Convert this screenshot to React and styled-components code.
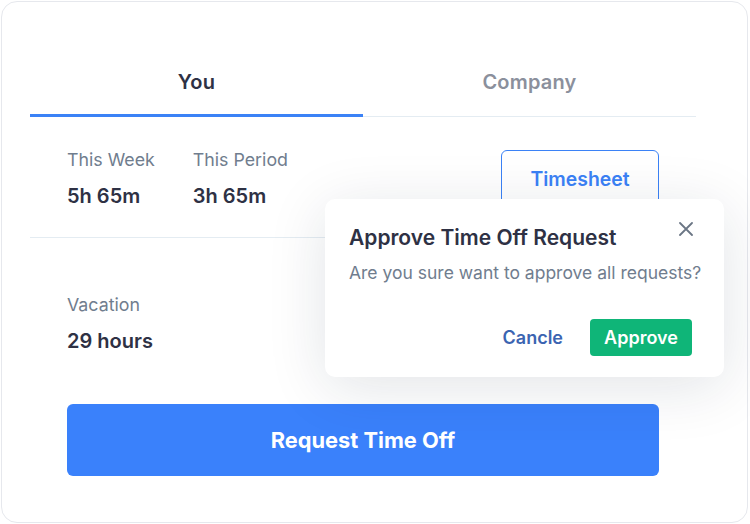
import React from "react";
import styled, { createGlobalStyle } from "styled-components";

const GlobalStyle = createGlobalStyle`
  body {
    margin: 0;
    background: #ffffff;
    font-family: Inter, "Noto Sans", sans-serif;
  }
`;

const tabs = ["You", "Company"];

export default function App() {
  return (
    <>
      <GlobalStyle />
      <Card>
        <TabBar>
          {tabs.map((t, i) => (
            <Tab key={t} $active={i === 0}>
              {t}
            </Tab>
          ))}
        </TabBar>

        <StatsRow>
          <Stats>
            <Stat>
              <Label>This Week</Label>
              <Value>5h 65m</Value>
            </Stat>
            <Stat>
              <Label>This Period</Label>
              <Value>3h 65m</Value>
            </Stat>
          </Stats>
          <OutlineButton>Timesheet</OutlineButton>
        </StatsRow>

        <Divider />

        <VacationBlock>
          <Stat>
            <Label>Vacation</Label>
            <Value>29 hours</Value>
          </Stat>
        </VacationBlock>

        <PrimaryButton>Request Time Off</PrimaryButton>

        <Dialog>
          <DialogHead>
            <DialogTitle>Approve Time Off Request</DialogTitle>
            <CloseButton aria-label="close">
              <svg width="14" height="14" viewBox="0 0 14 14">
                <path
                  d="M1 1L13 13M13 1L1 13"
                  stroke="#6b7685"
                  strokeWidth="1.8"
                  strokeLinecap="round"
                />
              </svg>
            </CloseButton>
          </DialogHead>
          <DialogText>Are you sure want to approve all requests?</DialogText>
          <DialogActions>
            <TextButton>Cancle</TextButton>
            <ApproveButton>Approve</ApproveButton>
          </DialogActions>
        </Dialog>
      </Card>
    </>
  );
}

const Card = styled.div`
  position: relative;
  box-sizing: border-box;
  margin: 1px;
  width: 747px;
  height: 522px;
  padding: 48px 51px 0 28px;
  background: #fff;
  border: 1px solid #e6e8ed;
  border-radius: 16px;
`;

const TabBar = styled.div`
  display: grid;
  grid-template-columns: 1fr 1fr;
`;

const Tab = styled.div`
  padding: 20px 0 ${(p) => (p.$active ? "20px" : "22px")};
  text-align: center;
  font-size: 20px;
  line-height: 24px;
  font-weight: 600;
  letter-spacing: 0.2px;
  color: ${(p) => (p.$active ? "#2e3144" : "#8b909c")};
  border-bottom: ${(p) => (p.$active ? "3px solid #3b82f6" : "1px solid #e4ecf2")};
`;

const StatsRow = styled.div`
  display: flex;
  justify-content: space-between;
  align-items: flex-start;
  padding: 32px 37px 29px;
`;

const Stats = styled.div`
  display: flex;
  gap: 38px;
`;

const Stat = styled.div`
  display: flex;
  flex-direction: column;
  gap: 13px;
`;

const Label = styled.div`
  font-size: 17.8px;
  line-height: 22px;
  color: #707d8e;
`;

const Value = styled.div`
  font-size: 20px;
  line-height: 24px;
  font-weight: 600;
  color: #2e3144;
`;

const OutlineButton = styled.button`
  box-sizing: border-box;
  width: 158px;
  height: 58px;
  margin-top: 1px;
  border: 1.5px solid #3b82f6;
  border-radius: 6px;
  background: #fff;
  color: #3b82f6;
  font-family: inherit;
  font-size: 19.4px;
  font-weight: 600;
`;

const Divider = styled.div`
  height: 1px;
  background: #e4ecf2;
`;

const VacationBlock = styled.div`
  padding: 56px 37px 51px;
`;

const PrimaryButton = styled.button`
  display: block;
  width: 592px;
  height: 72px;
  margin: 0 37px;
  border: none;
  border-radius: 6px;
  background: #3a81fb;
  color: #fff;
  font-family: inherit;
  font-size: 21.8px;
  font-weight: 700;
`;

const Dialog = styled.div`
  position: absolute;
  left: 323px;
  top: 197px;
  box-sizing: border-box;
  width: 399px;
  height: 178px;
  padding: 25px 32px 0 24px;
  background: #fff;
  border-radius: 10px;
  box-shadow: 0 10px 60px rgba(20, 30, 60, 0.12);
`;

const DialogHead = styled.div`
  display: flex;
  justify-content: space-between;
  align-items: flex-start;
`;

const DialogTitle = styled.div`
  font-size: 21px;
  line-height: 28px;
  font-weight: 600;
  color: #2e3144;
`;

const CloseButton = styled.button`
  display: flex;
  padding: 0;
  margin: -2px -1px 0 0;
  border: none;
  background: none;
`;

const DialogText = styled.div`
  margin-top: 10px;
  font-size: 17.5px;
  line-height: 22px;
  white-space: nowrap;
  color: #707d8e;
`;

const DialogActions = styled.div`
  display: flex;
  justify-content: flex-end;
  align-items: center;
  gap: 27px;
  margin-top: 35px;
`;

const TextButton = styled.button`
  padding: 0;
  border: none;
  background: none;
  color: #3b64b1;
  font-family: inherit;
  font-size: 18px;
  font-weight: 600;
`;

const ApproveButton = styled.button`
  width: 102px;
  height: 37px;
  border: none;
  border-radius: 4px;
  background: #0fb578;
  color: #fff;
  font-family: inherit;
  font-size: 18px;
  font-weight: 600;
`;
